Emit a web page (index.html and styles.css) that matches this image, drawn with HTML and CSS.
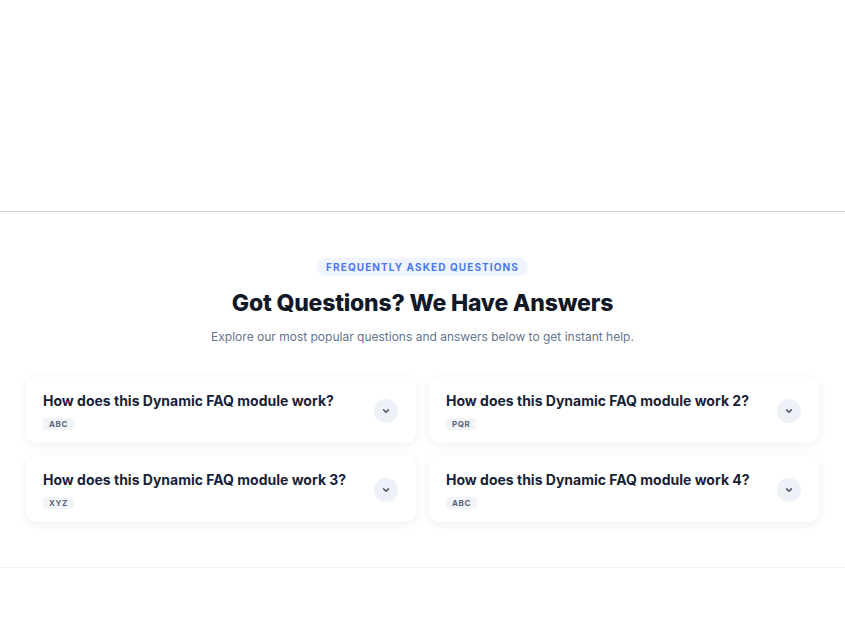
FILE: index.html
```html
<!DOCTYPE html>
<html lang="en">
<head>
    <meta charset="UTF-8" />
    <meta name="viewport" content="width=device-width, initial-scale=1.0" />
    <title>FAQ</title>
    <link rel="stylesheet" href="styles.css">
</head>
<body>
<div class="hero-space"></div>
<section class="faq-section">
    <div class="faq-head">
        <span class="faq-badge">Frequently Asked Questions</span>
        <h2>Got Questions? We Have Answers</h2>
        <p>Explore our most popular questions and answers below to get instant help.</p>
    </div>
    <div class="faq-grid">
        <div class="faq-item">
            <div class="faq-text">
                <h3>How does this Dynamic FAQ module work?</h3>
                <span class="faq-tag">ABC</span>
            </div>
            <button class="faq-toggle" aria-label="Open">
                <svg width="10" height="10" viewBox="0 0 10 10"><path d="M2.6 3.9 5 6.2 7.4 3.9" fill="none" stroke="#4b5568" stroke-width="1.5" stroke-linecap="round" stroke-linejoin="round"/></svg>
            </button>
        </div>
        <div class="faq-item">
            <div class="faq-text">
                <h3>How does this Dynamic FAQ module work 2?</h3>
                <span class="faq-tag">PQR</span>
            </div>
            <button class="faq-toggle" aria-label="Open">
                <svg width="10" height="10" viewBox="0 0 10 10"><path d="M2.6 3.9 5 6.2 7.4 3.9" fill="none" stroke="#4b5568" stroke-width="1.5" stroke-linecap="round" stroke-linejoin="round"/></svg>
            </button>
        </div>
        <div class="faq-item">
            <div class="faq-text">
                <h3>How does this Dynamic FAQ module work 3?</h3>
                <span class="faq-tag">XYZ</span>
            </div>
            <button class="faq-toggle" aria-label="Open">
                <svg width="10" height="10" viewBox="0 0 10 10"><path d="M2.6 3.9 5 6.2 7.4 3.9" fill="none" stroke="#4b5568" stroke-width="1.5" stroke-linecap="round" stroke-linejoin="round"/></svg>
            </button>
        </div>
        <div class="faq-item">
            <div class="faq-text">
                <h3>How does this Dynamic FAQ module work 4?</h3>
                <span class="faq-tag">ABC</span>
            </div>
            <button class="faq-toggle" aria-label="Open">
                <svg width="10" height="10" viewBox="0 0 10 10"><path d="M2.6 3.9 5 6.2 7.4 3.9" fill="none" stroke="#4b5568" stroke-width="1.5" stroke-linecap="round" stroke-linejoin="round"/></svg>
            </button>
        </div>
    </div>
</section>
<div class="after-space"></div>
</body>
</html>
```

FILE: styles.css
```css
body {
  margin: 0;
  font-family: Inter, "Noto Sans", sans-serif;
  background-color: #fff;
  color: #111827;
}

.hero-space {
  height: 211px;
  border-bottom: 1px solid #d6d4cc;
}

.faq-section {
  padding: 46px 26px 45px;
  border-bottom: 1px solid #f1f1f1;
}

.faq-head {
  display: flex;
  flex-direction: column;
  align-items: center;
  text-align: center;
}

.faq-badge {
  padding: 3px 9px;
  border-radius: 999px;
  background-color: #eff4fe;
  color: #4a78ee;
  font-size: 10px;
  font-weight: 700;
  letter-spacing: 1.1px;
  text-transform: uppercase;
  line-height: 12px;
}

.faq-head h2 {
  margin: 12px 0 0;
  font-size: 23px;
  font-weight: 800;
  line-height: 30px;
  color: #111827;
  letter-spacing: -0.2px;
}

.faq-head p {
  margin: 10px 0 0;
  font-size: 12px;
  line-height: 17px;
  color: #64748b;
}

.faq-grid {
  display: grid;
  grid-template-columns: 1fr 1fr;
  gap: 13px;
  margin-top: 32px;
}

.faq-item {
  display: flex;
  align-items: center;
  justify-content: space-between;
  padding: 14px 18px 12px 17px;
  background-color: #fff;
  border-radius: 10px;
  box-shadow: 0 2px 10px rgba(15, 23, 42, 0.07);
}

.faq-item h3 {
  margin: 0;
  font-size: 14px;
  font-weight: 700;
  line-height: 20px;
  color: #1a1f36;
}

.faq-tag {
  display: inline-block;
  margin-top: 4px;
  padding: 1px 6px;
  border-radius: 3px;
  background-color: #f1f4f9;
  color: #5b6577;
  font-size: 8px;
  font-weight: 700;
  letter-spacing: 0.6px;
  line-height: 10px;
}

.faq-toggle {
  flex-shrink: 0;
  width: 24px;
  height: 24px;
  padding: 0;
  border: none;
  border-radius: 50%;
  background-color: #eef1f7;
  display: flex;
  align-items: center;
  justify-content: center;
  cursor: pointer;
}

.after-space {
  height: 65px;
}
```
